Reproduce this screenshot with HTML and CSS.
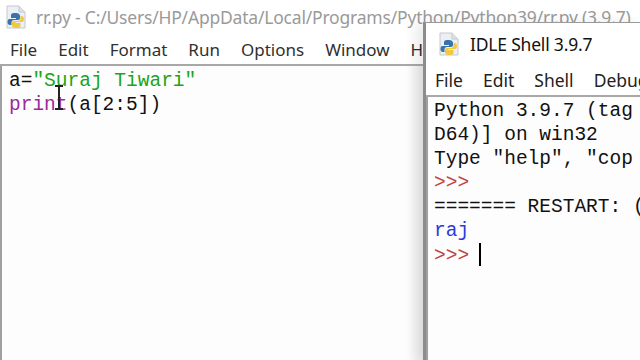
FILE: index.html
```html
<!DOCTYPE html>
<html>
<head>
<meta charset="utf-8">
<link rel="stylesheet" href="styles.css">
</head>
<body>
<div class="editor">
  <div class="titlebar">
    <svg class="appicon" width="22" height="24" viewBox="0 0 22 24">
      <path d="M2 1 H14 L20 7 V23 H2 Z" fill="#eceff3" stroke="#c4c9d0" stroke-width="1"/>
      <path d="M14 1 V7 H20" fill="#dde2e8" stroke="#c4c9d0" stroke-width="1"/>
      <path d="M10 8 C6 8 6 9.5 6 11 V13 H11 V14 H4.5 C3 14 2.5 15.5 2.5 17 C2.5 19 3.5 20 5 20 H6.5 V17.5 C6.5 16 7.5 15 9 15 H13 C14.2 15 15 14.2 15 13 V11 C15 9.5 14 8 10 8 Z" fill="#3a73ab"/>
      <path d="M11.5 23 C15.5 23 15.5 21.5 15.5 20 V18 H10.5 V17 H17 C18.5 17 19 15.5 19 14 C19 12 18 11 16.5 11 H15.5 V13.5 C15.5 15 14.5 16 13 16 H9 C7.8 16 7 16.8 7 18 V20 C7 21.5 8 23 11.5 23 Z" fill="#f3c93a"/>
    </svg>
    <span class="title inactive">rr.py - C:/Users/HP/AppData/Local/Programs/Python/Python39/rr.py (3.9.7)</span>
  </div>
  <div class="menubar">
    <span>File</span><span>Edit</span><span>Format</span><span>Run</span><span>Options</span><span>Window</span><span>Help</span>
  </div>
  <div class="code">
    <div class="line">a=<span class="str">"Suraj Tiwari"</span></div>
    <div class="line"><span class="bi">print</span>(a[2:5])</div>
    <div class="ibeam"></div>
  </div>
</div>

<div class="shell">
  <div class="titlebar shell-title">
    <svg class="appicon" width="22" height="24" viewBox="0 0 22 24">
      <path d="M2 1 H14 L20 7 V23 H2 Z" fill="#eceff3" stroke="#c4c9d0" stroke-width="1"/>
      <path d="M14 1 V7 H20" fill="#dde2e8" stroke="#c4c9d0" stroke-width="1"/>
      <path d="M10 8 C6 8 6 9.5 6 11 V13 H11 V14 H4.5 C3 14 2.5 15.5 2.5 17 C2.5 19 3.5 20 5 20 H6.5 V17.5 C6.5 16 7.5 15 9 15 H13 C14.2 15 15 14.2 15 13 V11 C15 9.5 14 8 10 8 Z" fill="#3a73ab"/>
      <path d="M11.5 23 C15.5 23 15.5 21.5 15.5 20 V18 H10.5 V17 H17 C18.5 17 19 15.5 19 14 C19 12 18 11 16.5 11 H15.5 V13.5 C15.5 15 14.5 16 13 16 H9 C7.8 16 7 16.8 7 18 V20 C7 21.5 8 23 11.5 23 Z" fill="#f3c93a"/>
    </svg>
    <span class="title">IDLE Shell 3.9.7</span>
  </div>
  <div class="menubar shell-menu">
    <span>File</span><span>Edit</span><span>Shell</span><span>Debug</span>
  </div>
  <div class="code shell-code">
    <div class="line">Python 3.9.7 (tag</div>
    <div class="line">D64)] on win32</div>
    <div class="line">Type "help", "cop</div>
    <div class="line"><span class="prompt">&gt;&gt;&gt;</span></div>
    <div class="line">======= RESTART: (</div>
    <div class="line"><span class="out">raj</span></div>
    <div class="line"><span class="prompt">&gt;&gt;&gt;</span> <span class="caret"></span></div>
  </div>
</div>
</body>
</html>
```

FILE: styles.css
```css
html, body {
  margin: 0;
  padding: 0;
  width: 640px;
  height: 360px;
  overflow: hidden;
  background: #ffffff;
}

.editor {
  width: 640px;
  height: 360px;
  display: flex;
  flex-direction: column;
  background: #fdfdfd;
  overflow: hidden;
}

.titlebar {
  flex-shrink: 0;
  height: 34px;
  display: flex;
  align-items: center;
  padding-left: 5px;
  gap: 9px;
  background: #ffffff;
  white-space: nowrap;
  overflow: hidden;
}

.title {
  font-family: "Noto Sans", "Open Sans", sans-serif;
  font-size: 17.5px;
  color: #1a1a1a;
  letter-spacing: -0.2px;
}

.title.inactive {
  color: #9a9a9a;
}

.menubar {
  flex-shrink: 0;
  height: 30px;
  display: flex;
  align-items: center;
  gap: 21px;
  padding-left: 10px;
  background: #ffffff;
  border-bottom: 2px solid #a8a8a8;
  font-family: "Noto Sans", "Open Sans", sans-serif;
  font-size: 17px;
  color: #303030;
  white-space: nowrap;
  overflow: hidden;
}

.code {
  flex: 1;
  min-height: 0;
  position: relative;
  padding: 3px 0 0 7px;
  border-left: 2px solid #a0a0a0;
  background: linear-gradient(to right, #fdfdfd 0, #fdfdfd 405px, #ececec 422px);
  font-family: "Liberation Mono", "Courier New", monospace;
  font-size: 19.5px;
  line-height: 24px;
  color: #111111;
  overflow: hidden;
}

.line {
  height: 24px;
  white-space: pre;
}

.str { color: #1aa51a; }
.bi { color: #9a2a9a; }
.prompt { color: #c04444; }
.out { color: #2a3adc; }

.ibeam {
  position: absolute;
  left: 56px;
  top: 19px;
  width: 2px;
  height: 25px;
  background: #222;
}

.ibeam::before, .ibeam::after {
  content: "";
  position: absolute;
  left: -3px;
  width: 8px;
  height: 2px;
  background: #222;
}
.ibeam::before { top: 0; }
.ibeam::after { bottom: 0; }

.shell {
  position: absolute;
  left: 423px;
  top: 22px;
  width: 217px;
  height: 338px;
  display: flex;
  flex-direction: column;
  border-left: 3px solid #8c8c8c;
  border-top: 1px solid #9a9a9a;
  background: #fdfdfd;
  box-shadow: -8px 0 12px rgba(0,0,0,0.08);
  overflow: hidden;
}

.shell-title {
  height: 42px;
  padding-left: 12px;
  gap: 10px;
}

.shell-title .title {
  font-size: 17.5px;
  color: #111;
}

.shell-menu {
  height: 30px;
  padding-left: 9px;
  gap: 20px;
  font-size: 17.5px;
  border-bottom: 2px solid #a8a8a8;
  color: #222;
}

.shell-code {
  padding: 2px 0 0 6px;
  border-left: 2px solid #a0a0a0;
  background: #fdfdfd;
}

.caret {
  display: inline-block;
  width: 2px;
  height: 23px;
  margin-left: -2px;
  background: #000;
  vertical-align: -5px;
}
```
